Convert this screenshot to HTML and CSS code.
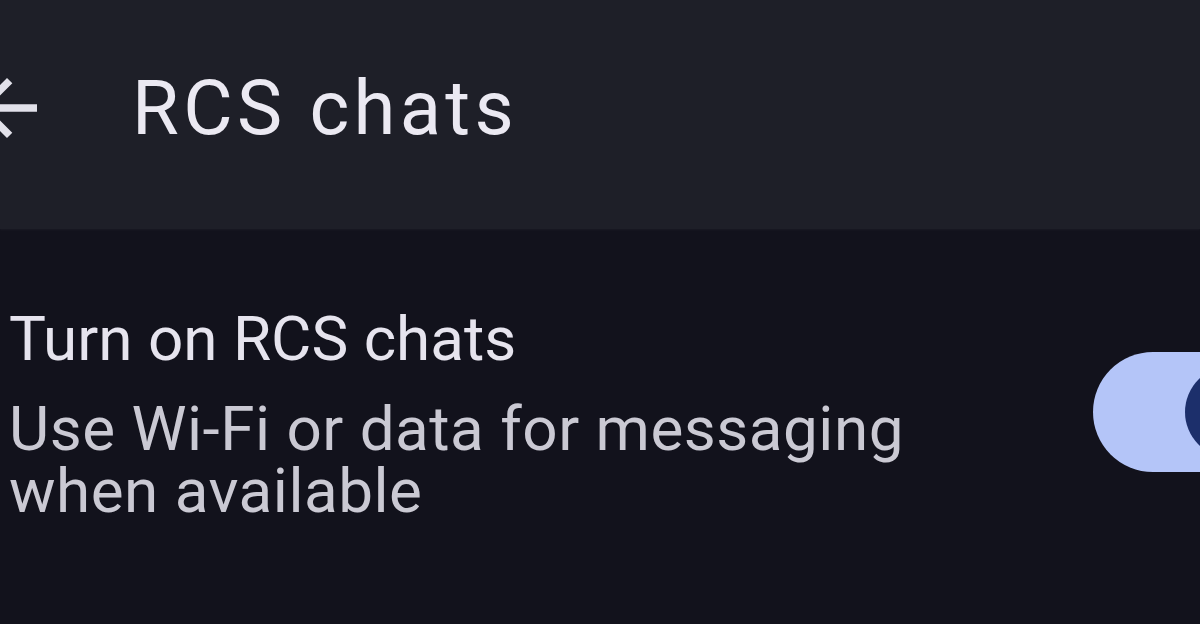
FILE: index.html
```html
<!DOCTYPE html>
<html lang="en">
<head>
    <meta charset="UTF-8">
    <meta name="viewport" content="width=device-width, initial-scale=1.0">
    <title>RCS chats</title>
    <link rel="stylesheet" href="styles.css">
</head>
<body>
    <header class="topbar">
        <svg class="back" viewBox="0 0 24 24" aria-hidden="true">
            <path d="M20 11H7.83l5.59-5.59L12 4l-8 8 8 8 1.41-1.41L7.83 13H20v-2z"/>
        </svg>
        <h1>RCS chats</h1>
    </header>

    <main class="content">
        <div class="setting">
            <div class="setting-text">
                <div class="setting-title">Turn on RCS chats</div>
                <div class="setting-sub">Use Wi-Fi or data for messaging when available</div>
            </div>
            <div class="toggle on">
                <span class="thumb"></span>
            </div>
        </div>
    </main>
</body>
</html>
```

FILE: styles.css
```css
html, body {
    margin: 0;
    padding: 0;
    height: 100%;
}
body {
    font-family: Roboto, "Noto Sans", sans-serif;
    background-color: #12121c;
    color: #e6e4ee;
    overflow: hidden;
}
.topbar {
    height: 229px;
    background-color: #1e1f28;
    display: flex;
    align-items: center;
    box-shadow: 0 1px 2px rgba(255,255,255,0.04);
}
.back {
    width: 90px;
    height: 90px;
    fill: #e2e1ea;
    margin-left: -38px;
    margin-top: -14px;
    flex-shrink: 0;
}
h1 {
    margin: 0 0 14px 80px;
    font-size: 76px;
    font-weight: 400;
    letter-spacing: 4.3px;
    color: #ebe9f2;
}
.setting {
    display: flex;
    align-items: flex-start;
    justify-content: space-between;
    padding: 74px 0 0 9px;
}
.setting-text {
    width: 940px;
}
.setting-title {
    font-size: 62px;
    line-height: 72px;
    color: #e6e4ee;
}
.setting-sub {
    margin-top: 23px;
    font-size: 62px;
    line-height: 62px;
    letter-spacing: 0.5px;
    color: #cac9d3;
}
.toggle {
    width: 107px;
    height: 120px;
    margin-top: 49px;
    border-radius: 60px 0 0 60px;
    background-color: #b4c5f8;
    position: relative;
    overflow: hidden;
    flex-shrink: 0;
}
.thumb {
    position: absolute;
    top: 14px;
    left: 92px;
    width: 92px;
    height: 92px;
    border-radius: 50%;
    background-color: #1c2f6b;
}
```
